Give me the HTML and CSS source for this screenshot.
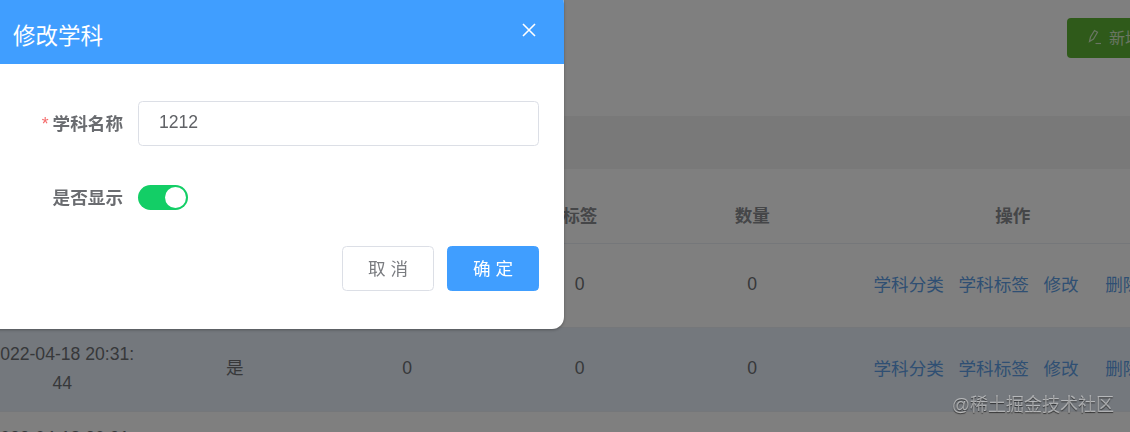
FILE: index.html
```html
<!DOCTYPE html>
<html lang="zh">
<head>
<meta charset="utf-8">
<title>修改学科</title>
<link rel="stylesheet" href="styles.css">
</head>
<body>
<main class="page">
  <div class="toolbar">
    <button class="add-btn" type="button">
      <svg class="add-icon" viewBox="0 0 14 16" width="14" height="16" aria-hidden="true">
        <path d="M1.5 12.5 L2.5 8 L6.5 1.5 L9.5 3.3 L5.5 10 Z" fill="none" stroke="currentColor" stroke-width="1.2"/>
        <path d="M7.5 14.5 H13" fill="none" stroke="currentColor" stroke-width="1.1"/>
      </svg>
      <span>新增学科</span>
    </button>
  </div>
  <div class="band"></div>
  <table class="grid">
    <colgroup>
      <col class="col-data"><col class="col-data"><col class="col-data"><col class="col-data"><col class="col-data"><col class="col-ops">
    </colgroup>
    <thead>
      <tr><th>创建时间</th><th>是否显示</th><th>分类</th><th>标签</th><th>数量</th><th>操作</th></tr>
    </thead>
    <tbody>
      <tr>
        <td>2022-04-18 20:31:<br>12</td><td>是</td><td>0</td><td>0</td><td>0</td>
        <td class="ops"><div class="links"><a>学科分类</a><a>学科标签</a><a class="edit">修改</a><a>删除</a></div></td>
      </tr>
      <tr class="hovered">
        <td>2022-04-18 20:31:<br>44</td><td>是</td><td>0</td><td>0</td><td>0</td>
        <td class="ops"><div class="links"><a>学科分类</a><a>学科标签</a><a class="edit">修改</a><a>删除</a></div></td>
      </tr>
      <tr>
        <td>2022-04-18 20:31:<br>51</td><td>是</td><td>0</td><td>0</td><td>0</td>
        <td class="ops"><div class="links"><a>学科分类</a><a>学科标签</a><a class="edit">修改</a><a>删除</a></div></td>
      </tr>
    </tbody>
  </table>
</main>

<div class="mask"></div>

<section class="dialog">
  <header class="dialog-head">
    <h2 class="dialog-title">修改学科</h2>
    <svg class="dialog-close" viewBox="0 0 14 14" width="14" height="14" aria-hidden="true">
      <path d="M1 1 L13 13 M13 1 L1 13" fill="none" stroke="currentColor" stroke-width="1.6"/>
    </svg>
  </header>
  <form class="dialog-body">
    <div class="field field-name">
      <label class="field-label"><span class="req">*</span>学科名称</label>
      <div class="input">1212</div>
    </div>
    <div class="field field-switch">
      <label class="field-label">是否显示</label>
      <span class="switch"><span class="knob"></span></span>
    </div>
    <div class="actions">
      <button class="btn" type="button">取 消</button>
      <button class="btn btn-primary" type="button">确 定</button>
    </div>
  </form>
</section>

<div class="watermark">@稀土掘金技术社区</div>
</body>
</html>
```
FILE: styles.css
```css
html, body {
  margin: 0;
  height: 100%;
  overflow: hidden;
  background: #fff;
}
body {
  font-family: "Liberation Sans", "Noto Sans CJK SC", sans-serif;
  font-size: 17.6px;
  color: #606266;
}
.page {
  width: 1211px;
  margin-left: -24px;
}
.toolbar {
  height: 116px;
  box-sizing: border-box;
  padding: 18px 0 0 1091px;
}
.add-btn {
  display: flex;
  align-items: center;
  gap: 7px;
  width: 120px;
  height: 40px;
  box-sizing: border-box;
  padding: 0 0 2px 21px;
  border: 0;
  border-radius: 4px;
  background: #5fb535;
  color: rgba(255, 255, 255, .72);
  font: inherit;
  font-size: 16px;
  white-space: nowrap;
}
.add-icon { flex: none; }
.band {
  height: 53px;
  background: #f2f2f2;
}
.grid {
  width: 1211px;
  table-layout: fixed;
  border-collapse: separate;
  border-spacing: 0;
}
.col-data { width: 172.5px; }
.col-ops { width: 348.5px; }
.grid th {
  height: 75px;
  padding: 16px 0 0;
  box-sizing: border-box;
  border-bottom: 1px solid #ebeef5;
  font-weight: 700;
  font-size: 17.6px;
  color: #8a8c90;
  text-align: center;
}
.grid td {
  height: 84px;
  padding: 0 12px 2px;
  box-sizing: border-box;
  border-bottom: 1px solid #ebeef5;
  line-height: 29px;
  text-align: center;
  color: #6f7175;
  overflow: hidden;
}
.hovered td { background: #e8f1fb; }
.grid td.ops { padding: 0 0 0 35px; text-align: left; }
.links {
  display: flex;
  gap: 14.6px;
  white-space: nowrap;
  font-size: 17.6px;
  color: #5f9fe6;
}
.links .edit { margin-right: 12px; }
.mask {
  position: fixed;
  inset: 0;
  background: rgba(0, 0, 0, .5);
}
.dialog {
  position: absolute;
  top: -8px;
  left: -24px;
  width: 588px;
  height: 337px;
  border-radius: 12px;
  background: #fff;
  overflow: hidden;
  box-shadow: 0 1px 3px rgba(0, 0, 0, .3);
}
.dialog-head {
  display: flex;
  align-items: center;
  justify-content: space-between;
  height: 72px;
  box-sizing: border-box;
  padding: 12px 28px 0 37px;
  background: #409eff;
  color: #fff;
}
.dialog-title {
  margin: 0;
  font-size: 22.5px;
  font-weight: 400;
}
.dialog-close { margin-top: -9px; }
.dialog-body {
  display: flex;
  flex-direction: column;
  padding: 37px 25px 0 0;
}
.field {
  display: flex;
  align-items: center;
}
.field-name { height: 45px; }
.field-switch { height: 25px; margin-top: 39px; }
.field-label {
  flex: none;
  width: 147px;
  padding-bottom: 3px;
  text-align: right;
  font-weight: 700;
  color: #6a6c70;
  white-space: nowrap;
}
.req {
  margin-right: 4px;
  color: #f56c6c;
  font-weight: 400;
}
.input {
  flex: 1;
  height: 45px;
  box-sizing: border-box;
  margin-left: 15px;
  padding: 0 20px;
  border: 1px solid #dcdfe6;
  border-radius: 4.5px;
  line-height: 41px;
  color: #606266;
}
.switch {
  display: flex;
  justify-content: flex-end;
  align-items: center;
  width: 50px;
  height: 25px;
  box-sizing: border-box;
  margin-left: 15px;
  padding-right: 2px;
  border-radius: 13px;
  background: #13ce66;
}
.knob {
  width: 21px;
  height: 21px;
  border-radius: 50%;
  background: #fff;
}
.actions {
  display: flex;
  justify-content: flex-end;
  gap: 13px;
  margin-top: 36px;
}
.btn {
  width: 92px;
  height: 45px;
  box-sizing: border-box;
  padding: 0 0 2px;
  border: 1px solid #dcdfe6;
  border-radius: 4.5px;
  background: #fff;
  color: #7a7c80;
  font: inherit;
}
.btn-primary {
  border-color: #409eff;
  background: #409eff;
  color: #fff;
}
.watermark {
  position: absolute;
  right: 16px;
  top: 393px;
  font-size: 18px;
  line-height: 24px;
  color: rgba(255, 255, 255, .5);
  text-shadow: 0 1px 1px rgba(0, 0, 0, .6);
  white-space: nowrap;
}
```
